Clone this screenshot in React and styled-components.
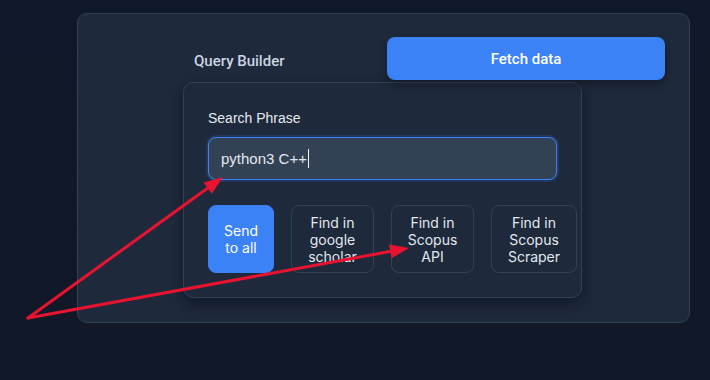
import React from 'react';
import styled, { createGlobalStyle } from 'styled-components';

const GlobalStyle = createGlobalStyle`
  html, body {
    margin: 0;
    padding: 0;
    background: #0f172a;
  }
  body {
    width: 710px;
    height: 380px;
    overflow: hidden;
    font-family: "Liberation Sans", Arial, sans-serif;
  }
`;

const Page = styled.div`
  position: relative;
  width: 710px;
  height: 380px;
  padding: 13px 20px 0 77px;
  box-sizing: border-box;
  background: linear-gradient(180deg, #0f172a 0%, #111827 100%);
`;

const OuterCard = styled.section`
  width: 613px;
  box-sizing: border-box;
  padding: 23px 24px 24px 105px;
  background: #1e293b;
  border: 1px solid #334155;
  border-radius: 10px;
`;

const Header = styled.div`
  display: flex;
  align-items: center;
  justify-content: space-between;
  height: 43px;
  margin-bottom: 2px;
`;

const Title = styled.h2`
  margin: 5px 0 0 11px;
  font-family: Roboto, "Liberation Sans", sans-serif;
  font-weight: 500;
  font-size: 15px;
  color: #cbd5e1;
`;

const FetchButton = styled.button`
  width: 278px;
  height: 43px;
  border: none;
  border-radius: 8px;
  background: #3b82f6;
  color: #ffffff;
  font-family: Roboto, "Liberation Sans", sans-serif;
  font-weight: 500;
  font-size: 15px;
  box-shadow: 0 4px 10px rgba(0, 0, 0, 0.35);
  position: relative;
  z-index: 1;
`;

const InnerCard = styled.div`
  width: 399px;
  box-sizing: border-box;
  padding: 25px 24px 24px 24px;
  background: #1e293b;
  border: 1px solid #334155;
  border-radius: 10px;
  box-shadow: 0 6px 14px rgba(2, 6, 23, 0.45);
`;

const Label = styled.div`
  font-size: 14px;
  line-height: 20px;
  color: #e2e8f0;
  margin-bottom: 9px;
`;

const Field = styled.div`
  display: flex;
  align-items: center;
  height: 43px;
  box-sizing: border-box;
  padding: 0 12px;
  background: #334155;
  border: 1px solid #3b82f6;
  border-radius: 8px;
  box-shadow: 0 0 0 2px rgba(59, 130, 246, 0.18);
  font-size: 15px;
  color: #e2e8f0;
`;

const Caret = styled.span`
  display: inline-block;
  width: 1px;
  height: 19px;
  margin-left: 1px;
  background: #f1f5f9;
`;

const ButtonRow = styled.div`
  display: flex;
  gap: 17px;
  margin-top: 25px;
`;

const ActionButton = styled.button`
  flex: none;
  width: ${(p) => p.$w}px;
  height: 68px;
  box-sizing: border-box;
  padding: 0;
  border-radius: 8px;
  border: 1px solid ${(p) => (p.$primary ? '#3b82f6' : '#334155')};
  background: ${(p) => (p.$primary ? '#3b82f6' : 'transparent')};
  color: ${(p) => (p.$primary ? '#ffffff' : '#e2e8f0')};
  font-family: Inter, "Liberation Sans", sans-serif;
  font-size: 14px;
  line-height: 17px;
  text-align: center;
`;

const Overlay = styled.svg`
  position: absolute;
  left: 0;
  top: 0;
  pointer-events: none;
`;

function Arrow({ x1, y1, x2, y2 }) {
  const dx = x2 - x1;
  const dy = y2 - y1;
  const len = Math.hypot(dx, dy);
  const ux = dx / len;
  const uy = dy / len;
  const head = 19;
  const half = 7;
  const bx = x2 - ux * head;
  const by = y2 - uy * head;
  const pts = `${x2},${y2} ${bx - uy * half},${by + ux * half} ${bx + uy * half},${by - ux * half}`;
  return (
    <g>
      <line x1={x1} y1={y1} x2={bx + ux * 2} y2={by + uy * 2} stroke="#e8132f" strokeWidth="3" strokeLinecap="round" />
      <polygon points={pts} fill="#e8132f" />
    </g>
  );
}

export default function App() {
  const buttons = [
    { w: 66, primary: true, lines: ['Send', 'to all'] },
    { w: 83, lines: ['Find in', 'google', 'scholar'] },
    { w: 83, lines: ['Find in', 'Scopus', 'API'] },
    { w: 86, lines: ['Find in', 'Scopus', 'Scraper'] },
  ];
  return (
    <>
      <GlobalStyle />
      <Page>
        <OuterCard>
          <Header>
            <Title>Query Builder</Title>
            <FetchButton>Fetch data</FetchButton>
          </Header>
          <InnerCard>
            <Label>Search Phrase</Label>
            <Field>
              python3 C++
              <Caret />
            </Field>
            <ButtonRow>
              {buttons.map((b, i) => (
                <ActionButton key={i} $w={b.w} $primary={b.primary}>
                  {b.lines.map((l, j) => (
                    <React.Fragment key={j}>
                      {j > 0 && <br />}
                      {l}
                    </React.Fragment>
                  ))}
                </ActionButton>
              ))}
            </ButtonRow>
          </InnerCard>
        </OuterCard>
        <Overlay width="710" height="380" viewBox="0 0 710 380">
          <Arrow x1={28} y1={318} x2={223} y2={177} />
          <Arrow x1={28} y1={318} x2={409} y2={248} />
        </Overlay>
      </Page>
    </>
  );
}
